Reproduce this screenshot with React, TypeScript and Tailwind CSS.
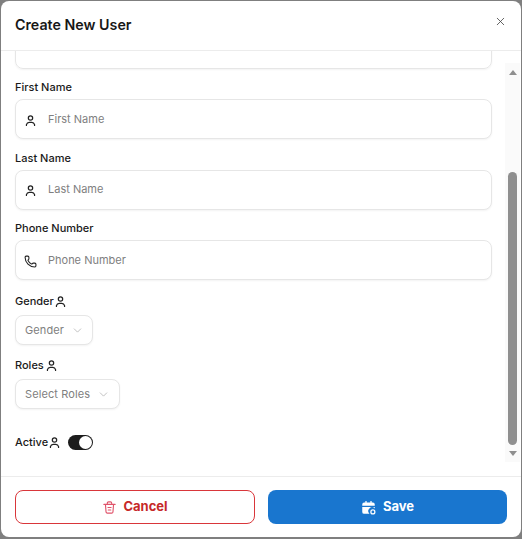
import { ChevronDown, Phone, X } from "lucide-react";

const inputBox = "flex h-10 items-center rounded-lg border border-[#e6e6e6] bg-white shadow-[0_1px_2px_rgba(0,0,0,0.05)]";
const selectBox = "flex h-[30px] items-center gap-[7px] rounded-lg border border-[#e6e6e6] bg-white pl-[9px] text-[11px] tracking-[0.1px] text-[#808080] shadow-[0_1px_2px_rgba(0,0,0,0.05)]";
const labelText = "text-[11px] font-medium leading-[18px] text-[#1a1a1a]";

function UserGlyph({ size = 13 }: { size?: number }) {
  return (
    <svg width={size} height={size} viewBox="0 0 24 24" fill="none" stroke="#222" strokeWidth="2.300" strokeLinecap="round">
      <circle cx="12" cy="7.500" r="4" />
      <path d="M4.500 21v-1.500a5.500 5.500 0 0 1 5.500-4h4a5.500 5.500 0 0 1 5.500 4V21" />
    </svg>
  );
}

function TextField({ label, icon }: { label: string; icon: React.ReactNode }) {
  return (
    <div>
      <div className={`h-[18px] ${labelText}`}>{label}</div>
      <div className={`${inputBox} mt-[3px]`}>
        <span className="ml-[2px] mr-[6px] flex w-[24px] justify-center pt-[2px]">{icon}</span>
        <span className="text-[11px] text-[#808080]">{label}</span>
      </div>
    </div>
  );
}

export default function App() {
  return (
    <div className="h-[539px] w-[522px] overflow-hidden bg-[#7f7f7f] pl-px pr-px pt-px font-['Inter',sans-serif]">
      <div className="flex h-[536px] flex-col overflow-hidden rounded-lg bg-white">
        <header className="flex h-[50px] shrink-0 items-center justify-between border-b border-[#ececec] pl-[14px] pr-[14px]">
          <h1 className="mb-px text-[14.25px] font-semibold text-[#171717]">Create New User</h1>
          <X size={13} strokeWidth={1.5} className="mb-[9px] text-[#444]" />
        </header>

        <div className="flex min-h-0 flex-1">
          <div className="min-w-0 flex-1 overflow-hidden pl-[14px] pr-[13px]">
            <div className="-mt-[22px] h-10 rounded-lg border border-[#e6e6e6] shadow-[0_1px_2px_rgba(0,0,0,0.05)]" />

            <div className="mt-[9px] flex flex-col gap-[9.5px]">
              <TextField label="First Name" icon={<UserGlyph />} />
              <TextField label="Last Name" icon={<UserGlyph />} />
              <TextField label="Phone Number" icon={<Phone size={13} strokeWidth={2} className="text-[#222]" />} />
            </div>

            <div className={`mt-[12px] flex items-center ${labelText}`}>
              Gender <UserGlyph size={13} />
            </div>
            <div className={`${selectBox} mt-[5px] w-[78px]`}>
              Gender <ChevronDown size={13} strokeWidth={1.2} className="text-[#a0a0a0]" />
            </div>

            <div className={`mt-[11px] flex items-center gap-px ${labelText}`}>
              Roles <UserGlyph size={13} />
            </div>
            <div className={`${selectBox} mt-[5px] w-[105px]`}>
              Select Roles <ChevronDown size={13} strokeWidth={1.2} className="text-[#a0a0a0]" />
            </div>

            <div className={`mt-[24px] flex items-center ${labelText}`}>
              Active
              <UserGlyph size={13} />
              <span className="ml-[7px] flex h-[15px] w-[25px] items-center justify-end rounded-full bg-[#1c1c1c] pr-px">
                <span className="h-[13px] w-[13px] rounded-full bg-white" />
              </span>
            </div>
          </div>

          {/* scrollbar */}
          <div className="mb-[14px] mr-px mt-[12px] flex w-[15px] shrink-0 flex-col items-center bg-[#fafafa]">
            <span className="mt-[7px] h-0 w-0 border-x-[4px] border-b-[5px] border-x-transparent border-b-[#8f8f8f]" />
            <span className="mt-[97px] h-[273px] w-[9px] rounded-full bg-[#8f8f8f]" />
            <span className="mt-[6px] h-0 w-0 border-x-[4px] border-t-[5px] border-x-transparent border-t-[#8f8f8f]" />
          </div>
        </div>

        <footer className="flex h-[61px] shrink-0 gap-[13px] border-t border-[#ececec] pl-[14px] pr-[14px] pt-[13px]">
          <button className="flex h-[34px] w-[240px] items-center justify-center gap-[6px] rounded-lg border border-[#d9363a] text-[13px] font-bold text-[#c62828]">
            <svg width="15" height="15" viewBox="0 0 24 24" fill="none" stroke="#e0536a" strokeWidth="1.800" strokeLinecap="round" strokeLinejoin="round">
              <path d="M3 7h18M8.500 7V5a2 2 0 0 1 2-2h3a2 2 0 0 1 2 2v2M5.500 7l1 12.500a2 2 0 0 0 2 1.500h7a2 2 0 0 0 2-1.500L18.500 7M9.500 12h5M10 16h4" />
            </svg>
            Cancel
          </button>
          <button className="flex h-[34px] w-[239px] items-center justify-center gap-[7px] rounded-lg bg-[#1976cf] text-[13px] font-bold text-white">
            <svg width="15" height="15" viewBox="0 0 24 24" fill="white">
              <path d="M7 1.500h2V4h6V1.500h2V4h2a3 3 0 0 1 3 3v2H2V7a3 3 0 0 1 3-3h2zM2 11h20v2.500a6 6 0 0 0-8.500 8.500H5a3 3 0 0 1-3-3z" />
              <circle cx="19" cy="19" r="3.200" fill="none" stroke="white" strokeWidth="2" />
            </svg>
            Save
          </button>
        </footer>
      </div>
    </div>
  );
}
